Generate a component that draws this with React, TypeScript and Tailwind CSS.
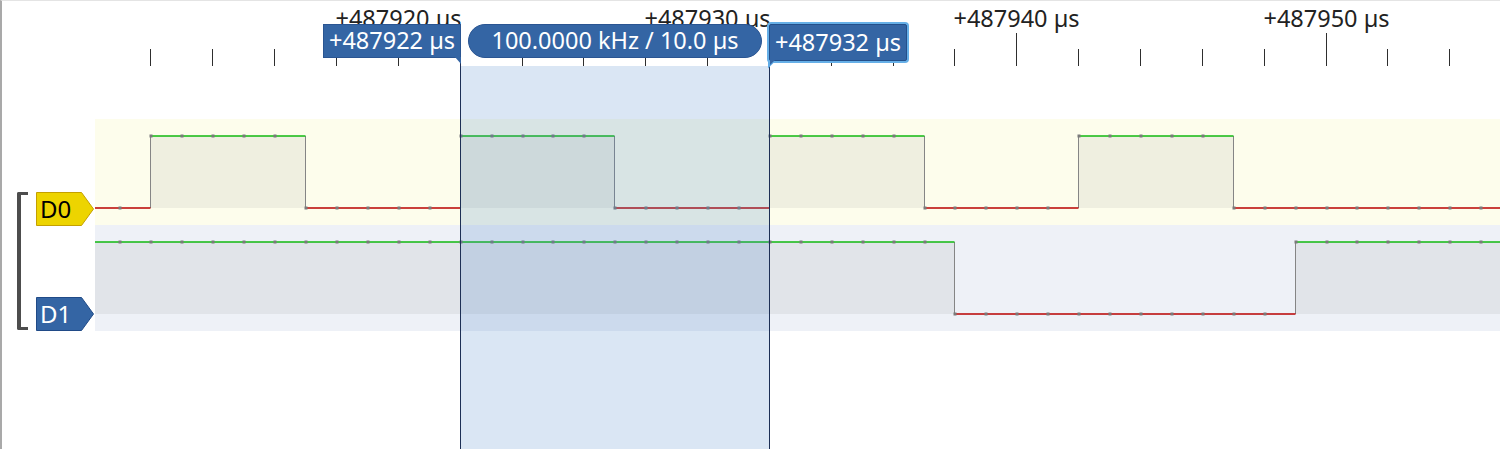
import React from "react";

const T0 = 487912;
const X0 = 150.4;
const PX = 30.925;
const xAt = (t: number) => Math.round(X0 + PX * (t - T0));

const XL = 95;
const XR = 1500;
const HY = 17;
const LY = 89;

type Seg = { x1: number; x2: number; high: boolean };

function buildSegments(startHigh: boolean, edges: number[]): Seg[] {
  const segs: Seg[] = [];
  let prev = XL;
  let high = startHigh;
  for (const e of edges) {
    const x = xAt(e);
    segs.push({ x1: prev, x2: x, high });
    prev = x;
    high = !high;
  }
  segs.push({ x1: prev, x2: XR, high });
  return segs;
}

function levelAt(startHigh: boolean, edges: number[], t: number) {
  let high = startHigh;
  for (const e of edges) if (e <= t) high = !high;
  return high;
}

function Trace({ startHigh, edges }: { startHigh: boolean; edges: number[] }) {
  const segs = buildSegments(startHigh, edges);
  const dots: { x: number; high: boolean }[] = [];
  for (let t = 487911; t <= 487955; t++) {
    const x = xAt(t);
    if (x < XL || x > XR) continue;
    dots.push({ x, high: levelAt(startHigh, edges, t) });
  }
  return (
    <svg width={1405} height={106} viewBox="95 0 1405 106">
      {segs
        .filter((s) => s.high)
        .map((s, i) => (
          <rect key={"f" + i} x={s.x1} y={HY} width={s.x2 - s.x1} height={LY - HY} fill="rgba(128,128,128,0.11)" />
        ))}
      {edges.map((e, i) => {
        const x = xAt(e) + 0.5;
        return <line key={"e" + i} x1={x} x2={x} y1={HY} y2={LY} stroke="#858585" strokeWidth={1} />;
      })}
      {segs.map((s, i) => (
        <line
          key={"s" + i}
          x1={s.x1 === XL ? XL : s.x1 + 0.5}
          x2={s.x2 === XR ? XR : s.x2 + 0.5}
          y1={s.high ? HY : LY}
          y2={s.high ? HY : LY}
          stroke={s.high ? "#10b810" : "#b80000"}
          strokeWidth={1.4}
        />
      ))}
      {dots.map((d, i) => (
        <rect key={"d" + i} x={d.x - 0.5} y={(d.high ? HY : LY) - 1.5} width={3} height={3} fill="#7a7a7a" />
      ))}
    </svg>
  );
}

function Ruler() {
  const ticks = [];
  for (let k = 0; k <= 21; k++) {
    const x = Math.round(X0 + 61.85 * k) + 0.5;
    const major = (k - 4) % 5 === 0;
    ticks.push({ x, major, t: T0 + 2 * k });
  }
  return (
    <svg width={1498} height={65} viewBox="2 1 1498 65">
      {ticks.map((tk, i) => (
        <line key={i} x1={tk.x} x2={tk.x} y1={tk.major ? 33 : 49} y2={66} stroke="#2e2e2e" strokeWidth={1} />
      ))}
      {ticks
        .filter((tk) => tk.major)
        .map((tk, i) => (
          <text key={"l" + i} x={tk.x} y={27} textAnchor="middle" fontSize={23.5} fill="#222222">
            {"+" + tk.t + " µs"}
          </text>
        ))}
    </svg>
  );
}

function ChannelLabel({ name, fill, stroke, text }: { name: string; fill: string; stroke: string; text: string }) {
  return (
    <div className="relative w-[58px] h-[34px]">
      <svg className="absolute inset-0" width={58} height={34} viewBox="0 0 58 34">
        <polygon points="0.5,0.5 45.5,0.5 57.5,17 45.5,33.5 0.5,33.5" fill={fill} stroke={stroke} strokeWidth={1} />
      </svg>
      <div className={"relative h-full pl-[4px] flex items-center text-[24px] leading-none " + text}>{name}</div>
    </div>
  );
}

export default function App() {
  return (
    <div className="relative w-[1500px] h-[449px] overflow-hidden bg-white border-l-2 border-l-[#a9a9a9] border-t border-t-[#e4e4e4] font-['Noto_Sans',sans-serif]">
      <Ruler />
      <div className="mt-[53px] flex">
        <div className="w-[93px] pt-[73px] flex items-start">
          <div className="ml-[15px] w-[11px] h-[138px] border-l-4 border-y-[3px] border-[#4d4d4d] rounded-l-[2px]" />
          <div className="ml-[8px] h-[139px] flex flex-col justify-between">
            <ChannelLabel name="D0" fill="#edd400" stroke="#c4a000" text="text-black" />
            <ChannelLabel name="D1" fill="#3465a4" stroke="#204a87" text="text-white" />
          </div>
        </div>
        <div className="w-[1405px] flex flex-col">
          <div className="h-[106px] bg-[#fdfdec]">
            <Trace startHigh={false} edges={[487912, 487917, 487922, 487927, 487932, 487937, 487942, 487947]} />
          </div>
          <div className="h-[106px] bg-[#eef1f7]">
            <Trace startHigh={true} edges={[487938, 487949]} />
          </div>
        </div>
      </div>

      {/* cursor region */}
      <div className="absolute left-[459px] top-[65px] bottom-0 w-[308px] bg-[rgba(70,130,200,0.2)]" />
      <div className="absolute left-[458px] top-[57px] bottom-0 w-px bg-[#1d2f55]" />
      <div className="absolute left-[767px] top-[61px] bottom-0 w-px bg-[#1d2f55]" />

      {/* left cursor label */}
      <div className="absolute left-[321px] top-[23px] w-[138px] h-[34px] bg-[#3465a4] border border-[#2a5592] text-white text-[23.5px] leading-none flex items-center justify-center">
        +487922 µs
      </div>
      <svg className="absolute left-[452px] top-[56px]" width={8} height={8} viewBox="0 0 8 8">
        <polygon points="1,0 7,0 7,7" fill="#3465a4" />
      </svg>

      {/* frequency / period pill */}
      <div className="absolute left-[466px] top-[23px] w-[294px] h-[34px] rounded-full bg-[#3465a4] border border-[#2a5592] text-white text-[23.5px] leading-none flex items-center justify-center">
        100.0000 kHz / 10.0 µs
      </div>

      {/* right cursor label (selected) */}
      <svg className="absolute left-[765px] top-[57px]" width={12} height={11} viewBox="0 0 12 11">
        <polygon points="2,0 10,0 2,8" fill="#3465a4" stroke="#62ace6" strokeWidth={2} />
      </svg>
      <div className="absolute left-[765px] top-[21px] w-[142px] h-[41px] rounded-[4px] bg-[#66afe7] p-[2px]">
        <div className="w-full h-full rounded-[2px] bg-[#3465a4] border border-[#244f8a] text-white text-[23.5px] leading-none flex items-center justify-center">
          +487932 µs
        </div>
      </div>
      <svg className="absolute left-[767px] top-[58px]" width={8} height={8} viewBox="0 0 8 8">
        <polygon points="1,0 7,0 1,6" fill="#3465a4" />
      </svg>
    </div>
  );
}
